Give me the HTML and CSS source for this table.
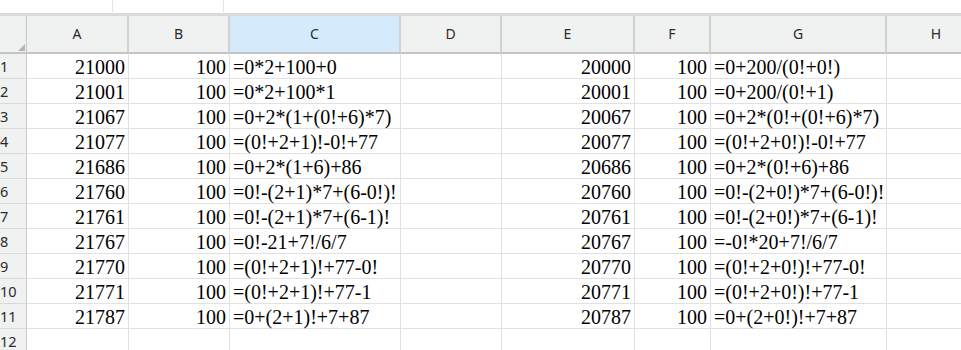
FILE: index.html
```html
<!DOCTYPE html>
<html>
<head>
<meta charset="utf-8">
<link rel="stylesheet" href="styles.css">
</head>
<body>
<div class="top">
  <div class="box namebox"></div>
  <div class="box fxbox"></div>
</div>
<div class="band"></div>
<div class="sheet">
  <div class="hd corner"><span class="tri"></span></div>
  <div class="hd">A</div>
  <div class="hd">B</div>
  <div class="hd sel">C</div>
  <div class="hd">D</div>
  <div class="hd">E</div>
  <div class="hd">F</div>
  <div class="hd">G</div>
  <div class="hd">H</div>

  <div class="rh">1</div><div class="c n">21000</div><div class="c n">100</div><div class="c">=0*2+100+0</div><div class="c"></div><div class="c n">20000</div><div class="c n">100</div><div class="c">=0+200/(0!+0!)</div><div class="c"></div>
  <div class="rh">2</div><div class="c n">21001</div><div class="c n">100</div><div class="c">=0*2+100*1</div><div class="c"></div><div class="c n">20001</div><div class="c n">100</div><div class="c">=0+200/(0!+1)</div><div class="c"></div>
  <div class="rh">3</div><div class="c n">21067</div><div class="c n">100</div><div class="c">=0+2*(1+(0!+6)*7)</div><div class="c"></div><div class="c n">20067</div><div class="c n">100</div><div class="c">=0+2*(0!+(0!+6)*7)</div><div class="c"></div>
  <div class="rh">4</div><div class="c n">21077</div><div class="c n">100</div><div class="c">=(0!+2+1)!-0!+77</div><div class="c"></div><div class="c n">20077</div><div class="c n">100</div><div class="c">=(0!+2+0!)!-0!+77</div><div class="c"></div>
  <div class="rh">5</div><div class="c n">21686</div><div class="c n">100</div><div class="c">=0+2*(1+6)+86</div><div class="c"></div><div class="c n">20686</div><div class="c n">100</div><div class="c">=0+2*(0!+6)+86</div><div class="c"></div>
  <div class="rh">6</div><div class="c n">21760</div><div class="c n">100</div><div class="c">=0!-(2+1)*7+(6-0!)!</div><div class="c"></div><div class="c n">20760</div><div class="c n">100</div><div class="c">=0!-(2+0!)*7+(6-0!)!</div><div class="c"></div>
  <div class="rh">7</div><div class="c n">21761</div><div class="c n">100</div><div class="c">=0!-(2+1)*7+(6-1)!</div><div class="c"></div><div class="c n">20761</div><div class="c n">100</div><div class="c">=0!-(2+0!)*7+(6-1)!</div><div class="c"></div>
  <div class="rh">8</div><div class="c n">21767</div><div class="c n">100</div><div class="c">=0!-21+7!/6/7</div><div class="c"></div><div class="c n">20767</div><div class="c n">100</div><div class="c">=-0!*20+7!/6/7</div><div class="c"></div>
  <div class="rh">9</div><div class="c n">21770</div><div class="c n">100</div><div class="c">=(0!+2+1)!+77-0!</div><div class="c"></div><div class="c n">20770</div><div class="c n">100</div><div class="c">=(0!+2+0!)!+77-0!</div><div class="c"></div>
  <div class="rh">10</div><div class="c n">21771</div><div class="c n">100</div><div class="c">=(0!+2+1)!+77-1</div><div class="c"></div><div class="c n">20771</div><div class="c n">100</div><div class="c">=(0!+2+0!)!+77-1</div><div class="c"></div>
  <div class="rh">11</div><div class="c n">21787</div><div class="c n">100</div><div class="c">=0+(2+1)!+7+87</div><div class="c"></div><div class="c n">20787</div><div class="c n">100</div><div class="c">=0+(2+0!)!+7+87</div><div class="c"></div>
  <div class="rh">12</div><div class="c"></div><div class="c"></div><div class="c"></div><div class="c"></div><div class="c"></div><div class="c"></div><div class="c"></div><div class="c"></div>
</div>
</body>
</html>
```
FILE: styles.css
```css
html, body {
  margin: 0;
  padding: 0;
  background: #ffffff;
}
body {
  width: 961px;
  height: 350px;
  overflow: hidden;
}
.top {
  display: flex;
  height: 13px;
}
.box {
  box-sizing: border-box;
  height: 12px;
  border-right: 1px solid #e3e3e3;
}
.namebox { width: 113px; }
.fxbox { width: 111px; }
.band {
  height: 3px;
  background: #dadada;
}
.sheet {
  display: grid;
  grid-template-columns: 27px 102px 101px 171px 101px 133px 76px 176px 100px;
  grid-template-rows: 38px;
  grid-auto-rows: 25px;
  width: 987px;
}
.hd {
  box-sizing: border-box;
  background: #f0f1f1;
  border-right: 2px solid #d2d2d2;
  border-bottom: 2px solid #c4c4c4;
  display: flex;
  align-items: center;
  justify-content: center;
  font-family: "Noto Sans", "Open Sans", sans-serif;
  font-size: 14px;
  color: #2b2b2b;
  padding-bottom: 1px;
}
.hd.sel {
  background: #d5ebfb;
}
.corner {
  border-right: 1px solid #c8c8c8;
  justify-content: flex-end;
  align-items: flex-end;
  padding: 0 1px 1px 0;
}
.tri {
  width: 0;
  height: 0;
  border-left: 7px solid transparent;
  border-bottom: 7px solid #b5b5b5;
}
.rh {
  box-sizing: border-box;
  background: #f0f1f1;
  border-right: 1px solid #c8c8c8;
  border-bottom: 1px solid #d9d9d9;
  font-family: "Noto Sans", "Open Sans", sans-serif;
  font-size: 14.5px;
  color: #2b2b2b;
  display: flex;
  align-items: flex-end;
  padding: 0 0 2px 0;
  line-height: 20px;
  overflow: hidden;
  white-space: nowrap;
}
.c {
  box-sizing: border-box;
  border-right: 1px solid #e1e1e1;
  border-bottom: 1px solid #e1e1e1;
  font-family: "Liberation Serif", "Times New Roman", serif;
  font-size: 20px;
  color: #000000;
  display: flex;
  align-items: flex-end;
  padding: 0 3px 0 3px;
  white-space: nowrap;
  overflow: visible;
  line-height: 22px;
}
.c.n {
  justify-content: flex-end;
}
```
